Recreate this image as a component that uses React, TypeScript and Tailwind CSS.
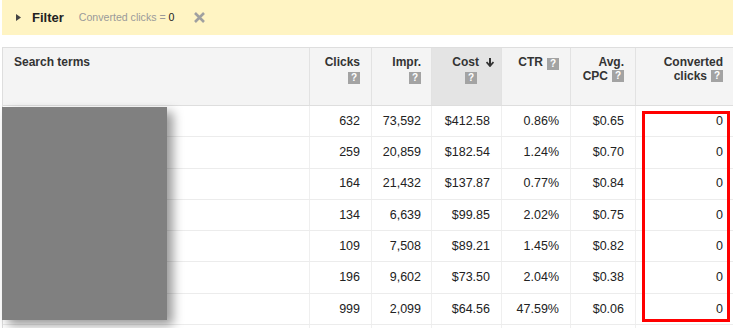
import React from "react";

const Q = () => (
  <span className="inline-flex items-center justify-center w-[12px] h-[12px] bg-[#a3a3a3] text-white text-[10px] font-bold leading-none align-middle">
    ?
  </span>
);

const rows = [
  ["632", "73,592", "$412.58", "0.86%", "$0.65", "0"],
  ["259", "20,859", "$182.54", "1.24%", "$0.70", "0"],
  ["164", "21,432", "$137.87", "0.77%", "$0.84", "0"],
  ["134", "6,639", "$99.85", "2.02%", "$0.75", "0"],
  ["109", "7,508", "$89.21", "1.45%", "$0.82", "0"],
  ["196", "9,602", "$73.50", "2.04%", "$0.38", "0"],
  ["999", "2,099", "$64.56", "47.59%", "$0.06", "0"],
  ["", "", "", "", "", ""],
];

const grid = "grid grid-cols-[306px_62px_60px_70px_69px_65px_99px]";

export default function App() {
  return (
    <div
      className="relative w-[733px] h-[328px] overflow-hidden bg-white"
      style={{ fontFamily: '"Liberation Sans", Arial, sans-serif' }}
    >
      {/* Filter bar */}
      <div className="ml-[2px] h-[35px] bg-[#fff4c3] flex items-center">
        <svg width="5" height="7" viewBox="0 0 5 7" className="ml-[14px]">
          <path d="M0 0 L5 3.5 L0 7 Z" fill="#444" />
        </svg>
        <span className="ml-[11px] text-[13px] font-bold text-[#222]">Filter</span>
        <span className="ml-[15px] text-[10.6px] text-[#9a9a9a]">
          Converted clicks = <span className="text-[#222]">0</span>
        </span>
        <svg width="11" height="11" viewBox="0 0 11 11" className="ml-[19px]">
          <path d="M1 1 L10 10 M10 1 L1 10" stroke="#a0a0a0" strokeWidth="2.6" />
        </svg>
      </div>

      {/* Table */}
      <div className="mt-[12px] ml-[2px] border-l border-t border-[#dedede] w-[800px]">
        <div className={`${grid} h-[58px] border-b border-[#dedede] bg-[#f4f4f4] text-[12px] font-bold text-[#333] leading-[14px]`}>
          <div className="pl-[11px] pt-[7px]">Search terms</div>
          <div className="border-l border-[#e2e2e2] pr-[11px] pt-[7px] flex flex-col items-end">
            <span>Clicks</span>
            <span className="mt-[1px]"><Q /></span>
          </div>
          <div className="border-l border-[#e2e2e2] pr-[10px] pt-[7px] flex flex-col items-end">
            <span>Impr.</span>
            <span className="mt-[1px]"><Q /></span>
          </div>
          <div className="border-l border-[#e2e2e2] bg-[#e4e4e4] pr-[7px] pt-[7px] flex justify-end items-start">
            <div className="flex flex-col items-end">
              <span>Cost</span>
              <span className="mt-[1px] mr-[2px]"><Q /></span>
            </div>
            <svg width="8" height="9" viewBox="0 0 8 9" className="ml-[7px] mt-[3px]">
              <path d="M4 0 V7" stroke="#333" strokeWidth="2" />
              <path d="M0.5 4 L4 8 L7.5 4" stroke="#333" strokeWidth="1.8" fill="none" />
            </svg>
          </div>
          <div className="border-l border-[#e2e2e2] pr-[11px] pt-[7px] flex justify-end items-start gap-[4px]">
            <span>CTR</span>
            <span className="mt-[1px]"><Q /></span>
          </div>
          <div className="border-l border-[#e2e2e2] pr-[11px] pt-[7px] flex flex-col items-end">
            <span>Avg.</span>
            <span className="flex items-center gap-[4px]">CPC <Q /></span>
          </div>
          <div className="border-l border-[#e2e2e2] pr-[11px] pt-[7px] flex flex-col items-end">
            <span>Converted</span>
            <span className="flex items-center gap-[4px]">clicks <Q /></span>
          </div>
        </div>

        {rows.map((r, i) => (
          <div
            key={i}
            className={`${grid} h-[31.3px] border-b border-[#ececec] text-[12.5px] text-[#222] items-stretch`}
          >
            <div />
            {r.map((c, j) => (
              <div
                key={j}
                className={`border-l border-[#efefef] flex items-center justify-end ${j === 1 ? "pr-[10px]" : "pr-[11px]"}`}
              >
                {c}
              </div>
            ))}
          </div>
        ))}
      </div>

      {/* Redaction block */}
      <div className="absolute left-[2px] top-[107px] w-[165px] h-[213px] bg-[#808080] shadow-[6px_5px_10px_rgba(0,0,0,0.4)]" />

      {/* Red highlight */}
      <div className="absolute left-[642px] top-[111px] w-[88px] h-[211px] border-[3px] border-[#ff0000]" />
    </div>
  );
}
